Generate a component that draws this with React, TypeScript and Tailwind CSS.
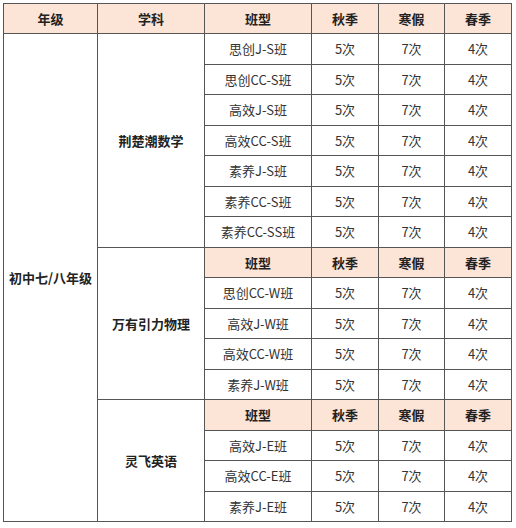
const mathClasses = [
  "思创J-S班",
  "思创CC-S班",
  "高效J-S班",
  "高效CC-S班",
  "素养J-S班",
  "素养CC-S班",
  "素养CC-SS班",
];
const physicsClasses = ["思创CC-W班", "高效J-W班", "高效CC-W班", "素养J-W班"];
const englishClasses = ["高效J-E班", "高效CC-E班", "素养J-E班"];

const cell = "border border-[#555] text-center align-middle p-0";
const head = `${cell} bg-[#fce4d6] font-bold text-[#222]`;

function HeadCells() {
  return (
    <>
      <td className={head}>班型</td>
      <td className={head}>秋季</td>
      <td className={head}>寒假</td>
      <td className={head}>春季</td>
    </>
  );
}

function ClassCells({ name }: { name: string }) {
  return (
    <>
      <td className={cell}>{name}</td>
      <td className={cell}>5次</td>
      <td className={cell}>7次</td>
      <td className={cell}>4次</td>
    </>
  );
}

export default function App() {
  return (
    <div
      className="bg-white w-[516px] h-[528px] pt-[3px] pl-[3px] text-[13px] text-[#333]"
      style={{ fontFamily: '"Noto Sans CJK SC", "Noto Sans", sans-serif' }}
    >
      <table className="border-collapse table-fixed w-[509px] h-[519px]">
        <colgroup>
          <col className="w-[94px]" />
          <col className="w-[107px]" />
          <col className="w-[107px]" />
          <col className="w-[67px]" />
          <col className="w-[66px]" />
          <col className="w-[67px]" />
        </colgroup>
        <tbody>
          <tr className="h-[30px]">
            <td className={head}>年级</td>
            <td className={head}>学科</td>
            <HeadCells />
          </tr>

          {/* 数学 */}
          {mathClasses.map((name, i) => (
            <tr key={name} className="h-[30.5px]">
              {i === 0 && (
                <td rowSpan={16} className={`${cell} font-bold text-[#222]`}>
                  初中七/八年级
                </td>
              )}
              {i === 0 && (
                <td rowSpan={7} className={`${cell} font-bold text-[#222]`}>
                  荆楚潮数学
                </td>
              )}
              <ClassCells name={name} />
            </tr>
          ))}

          {/* 物理 */}
          <tr className="h-[30.5px]">
            <td rowSpan={5} className={`${cell} font-bold text-[#222]`}>
              万有引力物理
            </td>
            <HeadCells />
          </tr>
          {physicsClasses.map((name) => (
            <tr key={name} className="h-[30.5px]">
              <ClassCells name={name} />
            </tr>
          ))}

          {/* 英语 */}
          <tr className="h-[30.5px]">
            <td rowSpan={4} className={`${cell} font-bold text-[#222]`}>
              灵飞英语
            </td>
            <HeadCells />
          </tr>
          {englishClasses.map((name) => (
            <tr key={name} className="h-[30.5px]">
              <ClassCells name={name} />
            </tr>
          ))}
        </tbody>
      </table>
    </div>
  );
}
